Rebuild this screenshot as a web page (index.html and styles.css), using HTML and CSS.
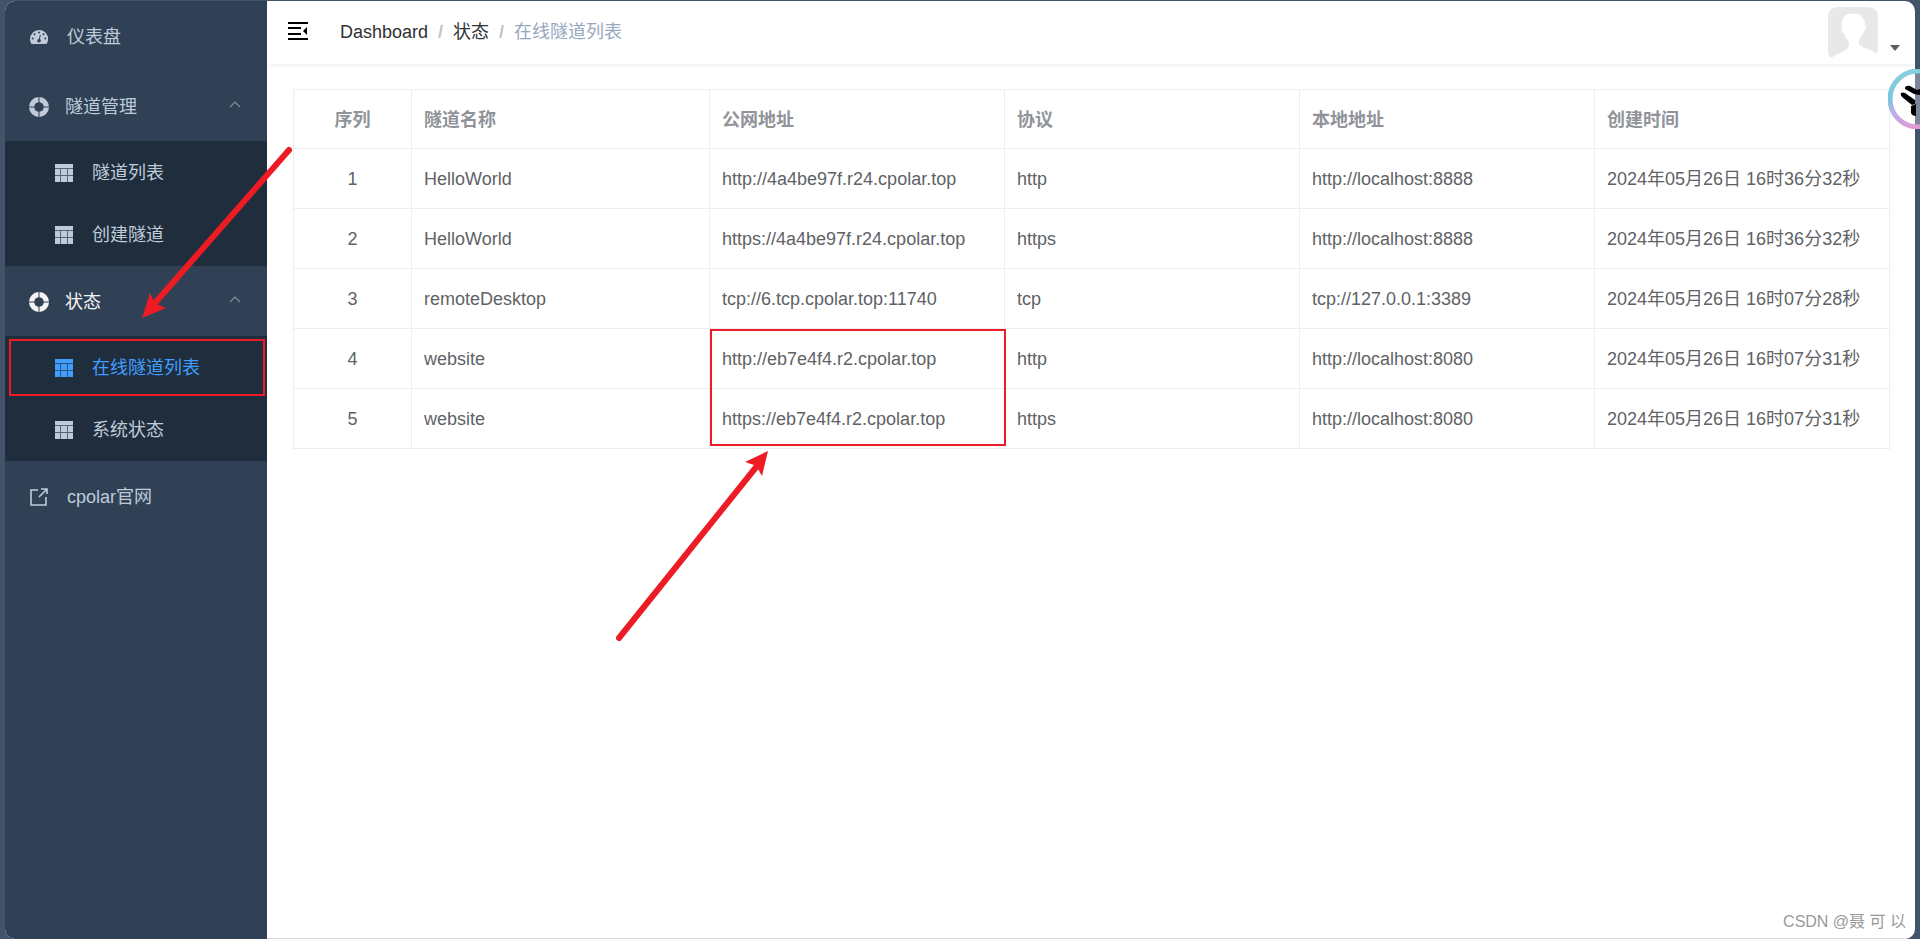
FILE: index.html
```html
<!DOCTYPE html>
<html lang="zh-CN">
<head>
<meta charset="utf-8">
<title>在线隧道列表</title>
<link rel="stylesheet" href="styles.css">
</head>
<body>
<svg class="defs" aria-hidden="true">
  <symbol id="i-gauge" viewBox="0 0 18 14">
    <path fill-rule="evenodd" d="M9 0a9 9 0 0 0-9 9c0 1.700.4 3.300 1.200 4.600.2.300.4.400.700.400h14.200c.3 0 .5-.1.7-.4A9 9 0 0 0 9 0zM9 1.500a1 1 0 1 1 0 2 1 1 0 0 1 0-2zM4.500 3.200a1 1 0 1 1 0 2 1 1 0 0 1 0-2zM13.500 3.200a1 1 0 1 1 0 2 1 1 0 0 1 0-2zM2.700 7.600a1 1 0 1 1 0 2 1 1 0 0 1 0-2zM15.300 7.600a1 1 0 1 1 0 2 1 1 0 0 1 0-2zM9.900 4.700l.9.200-.9 4.200a1.800 1.800 0 1 1-1-.2z"/>
  </symbol>
  <symbol id="i-ring" viewBox="0 0 20 20">
    <path d="M9.500 0A10 10 0 0 0 0 9.500h5.300a4.700 4.700 0 0 1 4.200-4.200zM10.500 0v5.300a4.700 4.700 0 0 1 4.200 4.200H20A10 10 0 0 0 10.500 0zM0 10.500A10 10 0 0 0 9.500 20v-5.300a4.700 4.700 0 0 1-4.200-4.200zM20 10.500h-5.300a4.700 4.700 0 0 1-4.200 4.200V20A10 10 0 0 0 20 10.500z"/>
  </symbol>
  <symbol id="i-table" viewBox="0 0 18 18">
    <path opacity=".35" d="M0 0h18v18H0z"/>
    <path d="M0 0h18v4H0zM0 5h5v6H0zM6 5h6v6H6zM13 5h5v6h-5zM0 12h5v6H0zM6 12h6v6H6zM13 12h5v6h-5z"/>
  </symbol>
  <symbol id="i-link" viewBox="0 0 18 18">
    <path fill="none" stroke="currentColor" stroke-width="1.600" d="M8 2H1v15h15V9M11 1h6v5M17 1L9 9"/>
  </symbol>
  <symbol id="i-up" viewBox="0 0 12 7">
    <path fill="none" stroke="currentColor" stroke-width="1.200" d="M1 6l5-5 5 5"/>
  </symbol>
</svg>

<div class="app">
  <nav class="sidebar">
    <a class="item" href="#"><svg class="icon gauge"><use href="#i-gauge"/></svg><span>仪表盘</span></a>
    <button class="item group" type="button"><svg class="icon ring"><use href="#i-ring"/></svg><span>隧道管理</span><svg class="up"><use href="#i-up"/></svg></button>
    <div class="submenu">
      <a class="sub" href="#"><svg class="icon table-icon"><use href="#i-table"/></svg><span>隧道列表</span></a>
      <a class="sub" href="#"><svg class="icon table-icon"><use href="#i-table"/></svg><span>创建隧道</span></a>
    </div>
    <button class="item group open" type="button"><svg class="icon ring"><use href="#i-ring"/></svg><span>状态</span><svg class="up"><use href="#i-up"/></svg></button>
    <div class="submenu">
      <a class="sub active" href="#"><svg class="icon table-icon"><use href="#i-table"/></svg><span>在线隧道列表</span></a>
      <a class="sub" href="#"><svg class="icon table-icon"><use href="#i-table"/></svg><span>系统状态</span></a>
    </div>
    <a class="item" href="#"><svg class="icon link-icon"><use href="#i-link"/></svg><span>cpolar官网</span></a>
  </nav>

  <div class="main">
    <header class="topbar">
      <button class="fold" type="button" aria-label="折叠菜单">
        <svg viewBox="0 0 20 18"><path d="M0 0h20v2H0zM0 5h13v2H0zM0 11h13v2H0zM0 16h20v2H0zM19 5v8l-4-4z"/></svg>
      </button>
      <nav class="crumbs">
        <a href="#">Dashboard</a><span class="sep">/</span><a href="#">状态</a><span class="sep">/</span><span class="here">在线隧道列表</span>
      </nav>
      <button class="user" type="button" aria-label="用户菜单">
        <svg class="avatar" viewBox="0 0 50 50">
          <path fill="#e8e8e8" d="M10 0h30q10 0 10 10v32q0 3-2 5-3-4-9-5-6-2-8-5-1-3 2-7 2-3 3-5l2-4q0-2-1-3 0-5-3-8l-1-2q-14-4-18 3-2 4-1 9-1 2 0 4l2 3q1 4 4 6 2 6 0 8-3 3-8 5-5 1-8 5-4-2-4-6V10Q0 0 10 0z"/>
        </svg>
        <svg class="caret" viewBox="0 0 10 6"><path d="M0 0h10L5 6z"/></svg>
      </button>
    </header>
    <main class="content">
      <table class="tunnels">
        <colgroup><col class="c-index"><col class="c-name"><col><col><col><col></colgroup>
        <thead><tr><th>序列</th><th>隧道名称</th><th>公网地址</th><th>协议</th><th>本地地址</th><th>创建时间</th></tr></thead>
        <tbody>
          <tr><td>1</td><td>HelloWorld</td><td>http://4a4be97f.r24.cpolar.top</td><td>http</td><td>http://localhost:8888</td><td>2024年05月26日 16时36分32秒</td></tr>
          <tr><td>2</td><td>HelloWorld</td><td>https://4a4be97f.r24.cpolar.top</td><td>https</td><td>http://localhost:8888</td><td>2024年05月26日 16时36分32秒</td></tr>
          <tr><td>3</td><td>remoteDesktop</td><td>tcp://6.tcp.cpolar.top:11740</td><td>tcp</td><td>tcp://127.0.0.1:3389</td><td>2024年05月26日 16时07分28秒</td></tr>
          <tr><td>4</td><td>website</td><td>http://eb7e4f4.r2.cpolar.top</td><td>http</td><td>http://localhost:8080</td><td>2024年05月26日 16时07分31秒</td></tr>
          <tr><td>5</td><td>website</td><td>https://eb7e4f4.r2.cpolar.top</td><td>https</td><td>http://localhost:8080</td><td>2024年05月26日 16时07分31秒</td></tr>
        </tbody>
      </table>
    </main>
  </div>
</div>

<svg class="marks" width="1920" height="939" aria-hidden="true">
  <g fill="none" stroke="#ed1c24" stroke-width="2"><rect x="10" y="340" width="254" height="55"/><rect x="711" y="330" width="294" height="115"/></g>
  <g stroke="#ed1c24" stroke-width="6" stroke-linecap="round"><path d="M289 150L155 303"/><path d="M619 638L757 466"/></g>
  <g fill="#ed1c24"><path d="M142 318l8-25 4 8 5 4 7 3z"/><path d="M768 451l-23 11 9 3 4 4 4 7z"/></g>
</svg>

<button class="floater" type="button" aria-label="助手">
  <svg viewBox="0 0 60 60">
    <defs><linearGradient id="rim" x1="0" y1="0" x2="0" y2="1"><stop offset="0" stop-color="#86cfdd"/><stop offset=".5" stop-color="#7cc6de"/><stop offset=".75" stop-color="#b9b0ea"/><stop offset="1" stop-color="#e09ad6"/></linearGradient></defs>
    <circle cx="30" cy="30" r="28" fill="#fff" fill-opacity=".3" stroke="url(#rim)" stroke-width="5"/>
    <path d="M17 18q3-2 5-1l7 4 3-1v6l-6-1-9-5zM13 24q2-1 4 0l10 7v4l-3 1-10-8q-2-2-1-4zM23 37l5-2v12q-4 0-5-3z"/>
  </svg>
</button>
<div class="credit">CSDN @聂 可 以</div>
</body>
</html>
```
FILE: styles.css
```css
* { box-sizing: border-box; }

body {
  margin: 0;
  min-height: 100vh;
  padding: 1px 5px 0;
  display: flex;
  overflow: hidden;
  position: relative;
  background: #43546a;
  color: #606266;
  font: 18px/24px "Liberation Sans", "Noto Sans CJK SC", sans-serif;
}

a { color: inherit; text-decoration: none; }
button { font: inherit; color: inherit; background: none; border: 0; padding: 0; text-align: left; }
svg { display: block; fill: currentColor; }
.defs { position: absolute; width: 0; height: 0; }

.app {
  flex: 1;
  display: flex;
  border-radius: 10px;
  overflow: hidden;
  background: #fff;
}

.sidebar {
  width: 262px;
  flex: none;
  display: flex;
  flex-direction: column;
  background: #304156;
  color: #bfcbd9;
}
.item {
  height: 70px;
  padding: 1px 26px 0 25px;
  display: flex;
  align-items: center;
  gap: 19px;
}
.group { gap: 16px; padding-left: 24px; }
.open { color: #f4f4f5; }
.icon { flex: none; }
.gauge { width: 18px; height: 14px; }
.ring { width: 20px; height: 20px; }
.table-icon, .link-icon { width: 18px; height: 18px; }
.up { width: 12px; height: 7px; margin: 0 0 4px auto; color: #8290a0; }
.submenu {
  min-height: 125px;
  padding-top: 1px;
  display: flex;
  flex-direction: column;
  background: #1f2d3d;
}
.sub {
  flex: 1;
  padding-left: 50px;
  display: flex;
  align-items: center;
  gap: 19px;
}
.active { color: #409eff; }

.main { flex: 1; min-width: 0; border-bottom: 1px solid #d9dadd; }
.topbar {
  height: 63px;
  padding: 0 15px 2px 21px;
  display: flex;
  align-items: center;
  box-shadow: 0 1px 5px rgba(0, 21, 41, .08);
}
.fold { color: #000; padding-bottom: 2px; }
.fold svg { width: 20px; height: 18px; }
.crumbs { margin-left: 32px; flex: 1; display: flex; color: #303133; }
.sep { margin: 0 10px; color: #c0c4cc; font-weight: bold; }
.here { color: #97a8be; }
.user { display: flex; align-items: flex-end; gap: 12px; color: #5a5e66; }
.avatar { width: 50px; height: 50px; }
.caret { width: 10px; height: 6px; margin-bottom: 6px; }

.content { padding: 25px 25px 25px 26px; }
.tunnels {
  width: 100%;
  table-layout: fixed;
  border-collapse: collapse;
}
.c-index { width: 118px; }
.c-name { width: 298px; }
.tunnels th, .tunnels td {
  height: 60px;
  padding: 0 12px;
  border: 1px solid #ebeef5;
  text-align: left;
  white-space: nowrap;
}
.tunnels th { height: 59px; padding-top: 1px; color: #909399; }
.tunnels th:first-child, .tunnels td:first-child { text-align: center; }

.marks { position: absolute; left: 0; top: 0; pointer-events: none; }
.floater { position: absolute; right: -28px; top: 69px; }
.floater svg { width: 60px; height: 60px; color: #000; }
.credit {
  position: absolute;
  right: 14px;
  bottom: 5px;
  color: #999;
  font-size: 16px;
}
```
